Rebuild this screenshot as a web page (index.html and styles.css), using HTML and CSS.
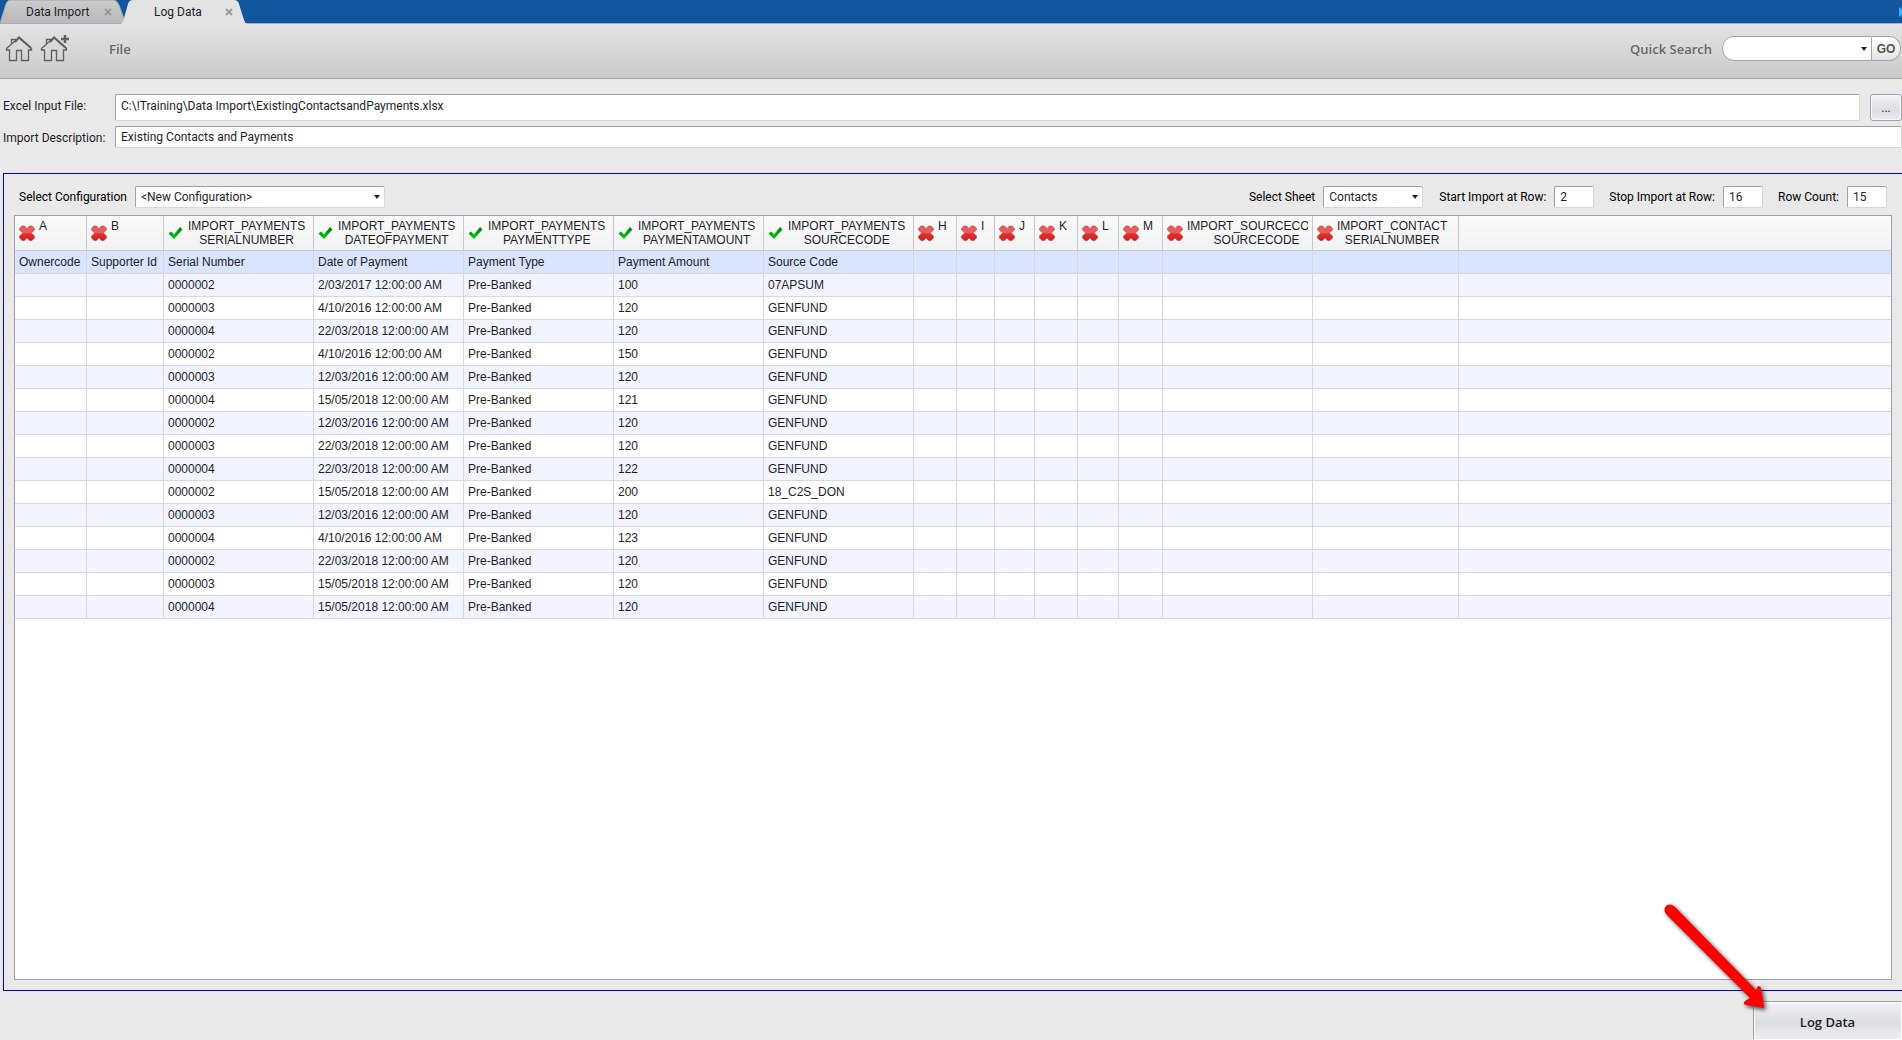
FILE: index.html
```html
<!DOCTYPE html>
<html lang="en">
<head>
    <meta charset="UTF-8">
    <meta name="viewport" content="width=device-width, initial-scale=1.0">
    <title>Log Data</title>
    <link rel="stylesheet" href="styles.css">
</head>
<body>
    <!-- shared icons -->
    <svg class="sprite" aria-hidden="true">
        <defs>
            <linearGradient id="red" x1="0" y1="0" x2="0" y2="1">
                <stop offset="0" stop-color="#e85a5a"/>
                <stop offset="0.45" stop-color="#e65f5f"/>
                <stop offset="0.55" stop-color="#dc3030"/>
                <stop offset="1" stop-color="#d42222"/>
            </linearGradient>
            <linearGradient id="green" x1="0" y1="0" x2="0" y2="1">
                <stop offset="0" stop-color="#007a10"/>
                <stop offset="1" stop-color="#00d010"/>
            </linearGradient>
            <linearGradient id="tabOff" x1="0" y1="0" x2="0" y2="1">
                <stop offset="0" stop-color="#cbcbcb"/>
                <stop offset="1" stop-color="#b9b9b9"/>
            </linearGradient>
        </defs>
        <symbol id="cross" viewBox="0 0 16 16">
            <path d="M3 1 L5.500 1 L8 3.500 L10.500 1 L13 1 L15.500 3.500 V5 L12.300 8 L15.500 11 V13 L13 15.500 H10.500 L8 13 L5.500 15.500 H3 L0.500 13 V11 L3.700 8 L0.500 5 V3.500 Z" fill="url(#red)" stroke="#c93c3c" stroke-width="0.600" stroke-linejoin="round"/>
        </symbol>
        <symbol id="check" viewBox="0 0 16 16">
            <path d="M0.500 8.500 L3 6.500 L6 9.500 L12 2 L14.500 4.500 L6 14 Z" fill="url(#green)"/>
        </symbol>
        <symbol id="home" viewBox="0 0 28 28">
            <path d="M1.500 14.500 L14 3.500 L26.500 14.500 V16 H23.500 V26.500 H16.500 V16.500 H11.500 V26.500 H4.500 V16 H1.500 Z M6.500 10 V5.500 H10.500 V7" fill="none" stroke="#606060" stroke-width="1.300"/>
            <path d="M10 8 L14 3.500 L26 14" fill="none" stroke="#606060" stroke-width="2"/>
        </symbol>
    </svg>

    <nav class="tabs">
        <div class="tab">
            <svg class="tab-shape" viewBox="0 0 128 24" preserveAspectRatio="none"><path d="M0 23 L6 4 Q7 0 11 0 H113 Q117 0 119 5 L126 24 H0 Z" fill="url(#tabOff)" stroke="#9aa4b0"/></svg>
            <a href="#">Data Import</a>
            <button class="close" aria-label="Close Data Import"><svg viewBox="0 0 8 8"><path d="M1 1 L7 7 M7 1 L1 7"/></svg></button>
        </div>
        <div class="tab active">
            <svg class="tab-shape" viewBox="0 0 128 24" preserveAspectRatio="none"><path d="M0 24 Q2 23 3 18 L7 4 Q8 0 12 0 H113 Q117 0 118 4 L123 20 Q124 23 126 24 Z" fill="#e3e3e3"/></svg>
            <a href="#">Log Data</a>
            <button class="close" aria-label="Close Log Data"><svg viewBox="0 0 8 8"><path d="M1 1 L7 7 M7 1 L1 7"/></svg></button>
        </div>
        <svg class="scroll-tabs" viewBox="0 0 3 10"><path d="M0 0 L3 2 V8 L0 10 Z" fill="#2fb4ff"/></svg>
    </nav>

    <header class="toolbar">
        <button class="icon-btn" aria-label="Home"><svg viewBox="0 0 30 30"><use href="#home" width="28" height="28"/></svg></button>
        <button class="icon-btn" aria-label="Add home"><svg viewBox="0 0 30 30"><use href="#home" width="28" height="28"/><path d="M21 5 H29 M25 1 V9" stroke="#606060" stroke-width="2.500"/></svg></button>
        <button class="menu">File</button>
        <form class="search">
            <label for="quick">Quick Search</label>
            <div class="drop">
                <input type="text" id="quick">
            </div>
            <button type="button" class="go">GO</button>
        </form>
    </header>

    <section class="fields">
        <div class="field">
            <label for="file">Excel Input File:</label>
            <input type="text" id="file" class="tall" value="C:\!Training\Data Import\ExistingContactsandPayments.xlsx">
            <button class="browse">...</button>
        </div>
        <div class="field">
            <label for="desc">Import Description:</label>
            <input type="text" id="desc" value="Existing Contacts and Payments">
        </div>
    </section>

    <main class="panel">
        <div class="options">
            <label for="config">Select Configuration</label>
            <div class="drop config">
                <select id="config"><option>&lt;New Configuration&gt;</option></select>
            </div>
            <label for="sheet" class="push">Select Sheet</label>
            <div class="drop sheet">
                <select id="sheet"><option>Contacts</option></select>
            </div>
            <label for="start">Start Import at Row:</label>
            <input type="text" id="start" value="2">
            <label for="stop">Stop Import at Row:</label>
            <input type="text" id="stop" value="16">
            <label for="count">Row Count:</label>
            <input type="text" id="count" value="15">
        </div>

        <div class="grid">
            <table>
                <colgroup>
                    <col class="c72"><col class="c77">
                    <col class="c150"><col class="c150"><col class="c150"><col class="c150"><col class="c150">
                    <col class="c43"><col class="c38"><col class="c40"><col class="c43"><col class="c41"><col class="c44">
                    <col class="c150"><col class="c146"><col>
                </colgroup>
                <thead>
                    <tr id="heads"></tr>
                </thead>
                <tbody id="rows"></tbody>
            </table>
        </div>
    </main>

    <footer class="actions">
        <button class="log">Log Data</button>
        <svg class="arrow" viewBox="0 0 110 115" aria-hidden="true">
            <path d="M4.500 11 Q4 5 10 4.500 Q13 4.500 15 7 L96 90 L98 86 Q101 86 101 89 L104 108 L86 105 Q82 104 85 101 L90 98 L7 15 Q5 13 4.500 11 Z" fill="#ff0000"/>
        </svg>
    </footer>

    <script src="script.js"></script>
</body>
</html>
```

FILE: styles.css
```css
* {
    box-sizing: border-box;
}

body {
    margin: 0;
    min-height: 100vh;
    display: flex;
    flex-direction: column;
    background-color: #e9e9e9;
    color: #1e1e28;
    font-family: Roboto, "Open Sans", sans-serif;
    font-size: 12px;
    line-height: 16px;
    overflow: hidden;
}

input,
select,
button {
    font-family: inherit;
    font-size: inherit;
    color: inherit;
    margin: 0;
}

button {
    padding: 0;
    border: none;
    background: none;
    cursor: pointer;
}

.sprite {
    position: absolute;
    width: 0;
    height: 0;
}

/* tabs */
.tabs {
    display: flex;
    align-items: center;
    height: 24px;
    background-color: #11559c;
    border-bottom: 1px solid #a3b1bf;
}

.tab {
    position: relative;
    display: flex;
    align-items: center;
    justify-content: space-between;
    width: 121px;
    height: 24px;
    padding: 0 9px 0 26px;
}

.tab.active {
    padding-left: 33px;
}

.tab-shape {
    position: absolute;
    left: 0;
    top: 0;
    width: 128px;
    height: 24px;
}

.tab a {
    position: relative;
    color: #1e1e28;
    text-decoration: none;
}

.close {
    position: relative;
    width: 8px;
    height: 8px;
}

.close svg {
    display: block;
    fill: none;
    stroke: #9a9a9a;
    stroke-width: 2;
}

.scroll-tabs {
    width: 3px;
    height: 10px;
    margin-left: auto;
}

/* toolbar */
.toolbar {
    display: flex;
    align-items: center;
    height: 55px;
    padding: 0 1px 5px 5px;
    background: linear-gradient(#e3e3e3, #cbcbcb);
    border-bottom: 1px solid #a6a6a6;
    font-family: "Open Sans", sans-serif;
}

.icon-btn {
    width: 30px;
    height: 30px;
    margin-right: 5px;
}

.icon-btn svg {
    display: block;
}

.menu {
    margin-left: 34px;
    font-size: 13px;
    font-weight: 600;
    color: #666;
}

.search {
    display: flex;
    align-items: center;
    margin-left: auto;
}

.search label {
    margin-right: 10px;
    font-size: 13px;
    font-weight: 600;
    color: #6a6a6a;
}

.search input {
    width: 150px;
    height: 25px;
    padding: 0 20px 0 10px;
    border: 1px solid #a6a6a6;
    border-radius: 12px 0 0 12px;
    background-color: #fff;
}

.go {
    width: 29px;
    height: 25px;
    border: 1px solid #a6a6a6;
    border-left: none;
    border-radius: 0 12px 12px 0;
    background: linear-gradient(#fff, #e4e4e4);
    font-family: "Liberation Sans", sans-serif;
    font-weight: bold;
    color: #555;
}

/* drop-down arrow */
.drop {
    position: relative;
    display: flex;
}

.drop::after {
    content: "";
    position: absolute;
    right: 5px;
    top: 9px;
    border: 3px solid transparent;
    border-top: 4px solid #1e1e28;
    border-bottom: none;
    pointer-events: none;
}

.search .drop::after {
    top: 11px;
}

/* import fields */
.fields {
    display: flex;
    flex-direction: column;
    gap: 5px;
    padding: 15px 0 25px 3px;
}

.field {
    display: flex;
}

.field label {
    width: 112px;
    padding-top: 4px;
}

.field input,
.options input,
.options select {
    height: 22px;
    padding: 0 5px;
    border: 1px solid #d6d6de;
    border-top-color: #a0a0ac;
    border-left-color: #a0a0ac;
    border-radius: 2px;
    background-color: #fff;
}

.field input {
    flex: 1;
}

.field .tall {
    height: 27px;
    padding-bottom: 4px;
    margin-right: 10px;
}

.browse {
    width: 32px;
    border: 1px solid #a0a0b4;
    border-radius: 3px;
    background: linear-gradient(#f4f4f6, #dcdde4 60%, #ececf2);
    box-shadow: inset 0 0 0 1px #f8f8fb;
}

/* grid panel */
.panel {
    flex: 1;
    display: flex;
    flex-direction: column;
    margin-left: 3px;
    padding: 12px 10px 10px;
    border: 1px solid #0000e0;
    border-right: none;
}

.options {
    display: flex;
    align-items: center;
    gap: 8px;
    padding: 0 5px;
    margin-bottom: 7px;
    color: #000;
}

.options .push {
    margin-left: auto;
}

.options input,
.options select {
    color: #1e1e28;
}

.options select {
    width: 100%;
    appearance: none;
}

.options input {
    width: 40px;
    margin-right: 7px;
}

.options input:last-child {
    margin-right: 0;
}

.config {
    width: 250px;
}

.sheet {
    width: 100px;
    margin-right: 8px;
}

.grid {
    flex: 1;
    border: 1px solid #a0a0ac;
    background-color: #fff;
}

table {
    width: 100%;
    table-layout: fixed;
    border-collapse: separate;
    border-spacing: 0;
    font-family: "Liberation Sans", sans-serif;
}

th,
td {
    padding: 0 4px;
    border-right: 1px solid #d8d8e0;
    border-bottom: 1px solid #d8d8e0;
    text-align: left;
    font-weight: normal;
    white-space: nowrap;
    overflow: hidden;
}

th:last-child,
td:last-child {
    border-right: none;
}

th {
    height: 35px;
    background: linear-gradient(#fafafa, #f1f2f3);
    border-color: #c8c8d0;
}

td {
    height: 23px;
}

tbody tr:nth-child(even) {
    background-color: #f2f5ff;
}

tbody tr:first-child {
    background-color: #d9e4ff;
}

.head {
    display: flex;
    align-items: center;
    gap: 4px;
    height: 34px;
    line-height: 14px;
    overflow: hidden;
}

.head svg {
    flex: none;
    width: 16px;
    height: 16px;
}

.head span {
    height: 28px;
    text-align: center;
}

.c38 { width: 38px; }
.c40 { width: 40px; }
.c41 { width: 41px; }
.c43 { width: 43px; }
.c44 { width: 44px; }
.c72 { width: 72px; }
.c77 { width: 77px; }
.c146 { width: 146px; }
.c150 { width: 150px; }

/* bottom bar */
.actions {
    position: relative;
    display: flex;
    justify-content: flex-end;
    padding-top: 10px;
}

.log {
    width: 149px;
    height: 39px;
    border: 1px solid #a0a0a8;
    border-right-color: #fff;
    border-bottom-color: #fff;
    background: linear-gradient(#f2f2f4, #dcdde2 55%, #eeeef3);
    box-shadow: inset 1px 1px 0 #fafafc;
    font-family: "Open Sans", sans-serif;
    font-size: 13px;
    font-weight: 600;
    padding-top: 2px;
}

.arrow {
    position: absolute;
    right: 132px;
    bottom: 25px;
    width: 110px;
    height: 115px;
    filter: drop-shadow(2px 2px 2px rgba(0, 0, 0, 0.7));
    pointer-events: none;
}
```

FILE: script.js
```js
const heads = [
    ['cross', 'A'],
    ['cross', 'B'],
    ['check', 'IMPORT_PAYMENTS', 'SERIALNUMBER'],
    ['check', 'IMPORT_PAYMENTS', 'DATEOFPAYMENT'],
    ['check', 'IMPORT_PAYMENTS', 'PAYMENTTYPE'],
    ['check', 'IMPORT_PAYMENTS', 'PAYMENTAMOUNT'],
    ['check', 'IMPORT_PAYMENTS', 'SOURCECODE'],
    ['cross', 'H'],
    ['cross', 'I'],
    ['cross', 'J'],
    ['cross', 'K'],
    ['cross', 'L'],
    ['cross', 'M'],
    ['cross', 'IMPORT_SOURCECODE', 'SOURCECODE'],
    ['cross', 'IMPORT_CONTACT', 'SERIALNUMBER']
];

// serial number, date, amount, source code
const payments = [
    ['0000002', '2/03/2017', '100', '07APSUM'],
    ['0000003', '4/10/2016', '120', 'GENFUND'],
    ['0000004', '22/03/2018', '120', 'GENFUND'],
    ['0000002', '4/10/2016', '150', 'GENFUND'],
    ['0000003', '12/03/2016', '120', 'GENFUND'],
    ['0000004', '15/05/2018', '121', 'GENFUND'],
    ['0000002', '12/03/2016', '120', 'GENFUND'],
    ['0000003', '22/03/2018', '120', 'GENFUND'],
    ['0000004', '22/03/2018', '122', 'GENFUND'],
    ['0000002', '15/05/2018', '200', '18_C2S_DON'],
    ['0000003', '12/03/2016', '120', 'GENFUND'],
    ['0000004', '4/10/2016', '123', 'GENFUND'],
    ['0000002', '22/03/2018', '120', 'GENFUND'],
    ['0000003', '15/05/2018', '120', 'GENFUND'],
    ['0000004', '15/05/2018', '120', 'GENFUND']
];

document.getElementById('heads').innerHTML = heads.map(([icon, ...lines]) =>
    `<th><div class="head"><svg><use href="#${icon}"/></svg><span>${lines.join('<br>')}</span></div></th>`
).join('') + '<th></th>';

const rows = [['Ownercode', 'Supporter Id', 'Serial Number', 'Date of Payment', 'Payment Type', 'Payment Amount', 'Source Code']];
payments.forEach(([serial, date, amount, source]) => {
    rows.push(['', '', serial, date + ' 12:00:00 AM', 'Pre-Banked', amount, source]);
});

document.getElementById('rows').innerHTML = rows.map(row => {
    // pad every row out to the full set of columns
    const cells = row.concat(Array(heads.length + 1 - row.length).fill(''));
    return '<tr>' + cells.map(text => `<td>${text}</td>`).join('') + '</tr>';
}).join('');
```
